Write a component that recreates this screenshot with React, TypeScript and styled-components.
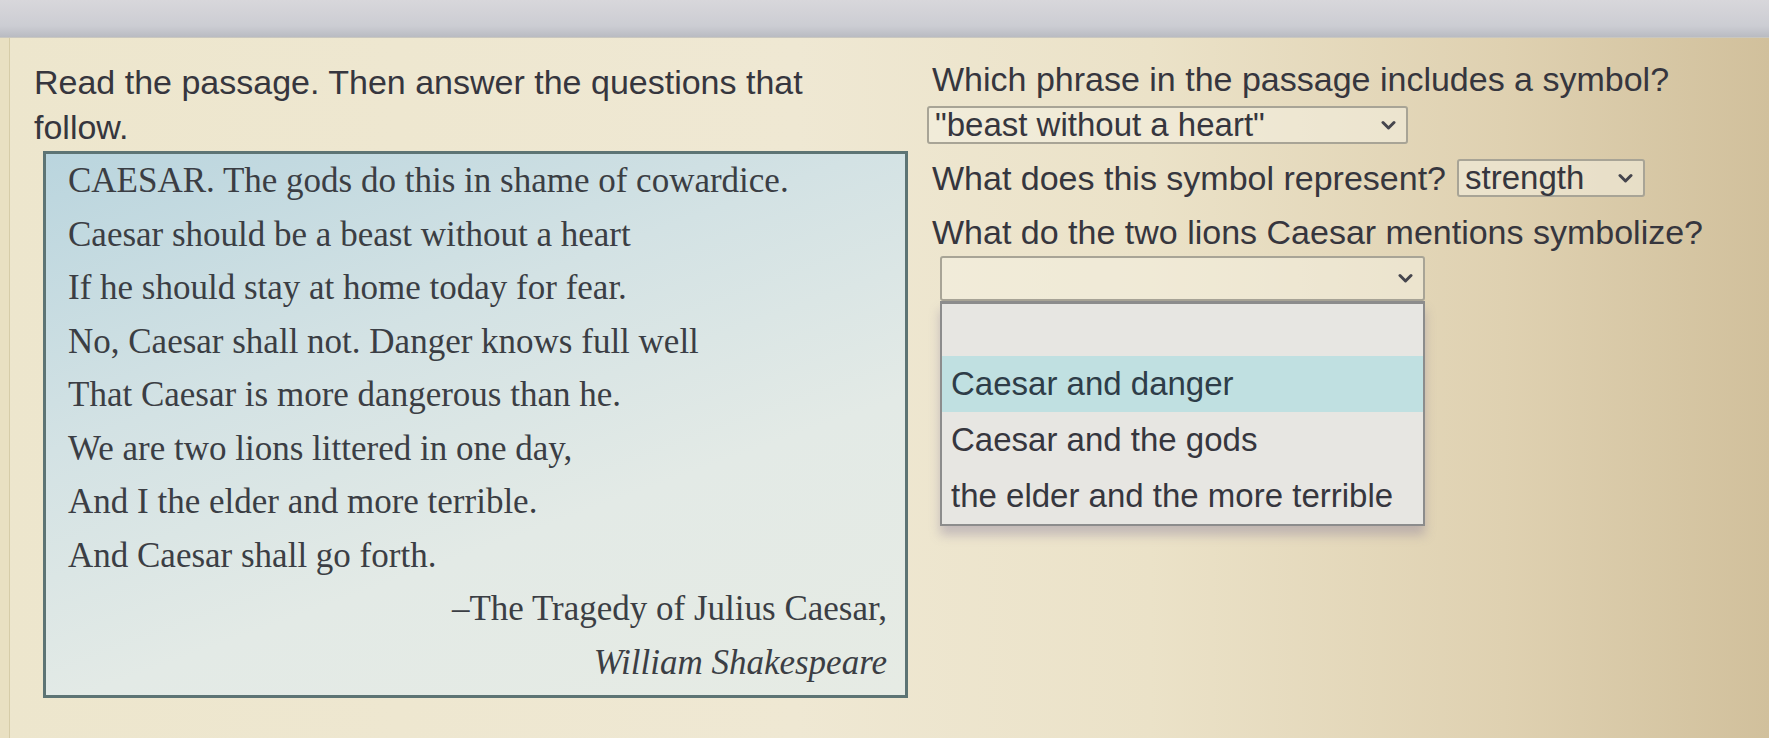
import React from 'react';
import styled, { createGlobalStyle } from 'styled-components';

const GlobalStyle = createGlobalStyle`
  html, body {
    margin: 0;
    padding: 0;
  }
  body {
    width: 1769px;
    height: 738px;
    overflow: hidden;
  }
`;

const Page = styled.div`
  width: 1769px;
  height: 738px;
  display: flex;
  flex-direction: column;
  background: linear-gradient(90deg, #ede6cd 0%, #efe8d3 45%, #ebe2c8 65%, #dfd1b1 85%, #d1c09c 100%);
  font-family: 'Liberation Sans', Arial, sans-serif;
  color: #36363e;
`;

const TopBar = styled.div`
  height: 37px;
  flex: 0 0 37px;
  background: linear-gradient(180deg, #d8d7db 0%, #cccdd3 70%, #b9bbc2 100%);
  border-bottom: 1px solid #c9c7bf;
`;

const Content = styled.div`
  flex: 1;
  display: flex;
  padding-left: 25px;
  border-left: 9px solid #e9e0c2;
  box-shadow: inset 1px 0 0 #d6cca8;
`;

const LeftColumn = styled.div`
  width: 874px;
  padding-top: 22px;
`;

const Intro = styled.p`
  margin: 0;
  width: 820px;
  font-size: 34px;
  line-height: 45px;
`;

const Passage = styled.div`
  margin: 1px 0 0 9px;
  height: 547px;
  box-sizing: border-box;
  border: 3px solid #5d7474;
  background: linear-gradient(160deg, #bad5de 0%, #d3e2e4 35%, #e3eae6 65%, #e6ebe4 100%);
  padding: 0 18px 0 22px;
  display: flex;
  flex-direction: column;
  font-family: 'Liberation Serif', 'Times New Roman', serif;
  color: #3b3e44;
`;

const Line = styled.div<{ $right?: boolean; $italic?: boolean }>`
  font-size: 35px;
  line-height: 53.5px;
  white-space: nowrap;
  text-align: ${(p) => (p.$right ? 'right' : 'left')};
  font-style: ${(p) => (p.$italic ? 'italic' : 'normal')};
`;

const RightColumn = styled.div`
  flex: 1;
  padding-top: 21px;
  padding-left: 24px;
  display: flex;
  flex-direction: column;
  align-items: flex-start;
`;

const Question = styled.div`
  font-size: 34px;
  line-height: 40px;
  white-space: nowrap;
`;

const Row = styled.div`
  display: flex;
  align-items: center;
  gap: 11px;
  margin-top: 14px;
`;

const SelectBox = styled.div<{ $width: number; $height: number }>`
  width: ${(p) => p.$width}px;
  height: ${(p) => p.$height}px;
  box-sizing: border-box;
  display: flex;
  align-items: center;
  justify-content: space-between;
  padding: 0 10px 0 6px;
  border: 2px solid #a8a496;
  border-radius: 3px;
  background: rgba(244, 240, 226, 0.55);
  font-size: 33px;
  color: #36363e;
  white-space: nowrap;
`;

const Chevron = () => (
  <svg width="15" height="11" viewBox="0 0 15 11">
    <path d="M2 2.5 L7.5 8 L13 2.5" fill="none" stroke="#45454d" strokeWidth="3" strokeLinecap="round" strokeLinejoin="round" />
  </svg>
);

const DropWrap = styled.div`
  position: relative;
  margin-top: 4px;
  margin-left: 8px;
`;

const ListBox = styled.div`
  position: absolute;
  top: 100%;
  left: 0;
  width: 485px;
  box-sizing: border-box;
  border: 2px solid #8c8c8c;
  border-top-width: 3px;
  background: #e7e6e2;
  box-shadow: 0 9px 10px rgba(120, 110, 150, 0.35);
`;

const Option = styled.div<{ $active?: boolean; $blank?: boolean }>`
  height: ${(p) => (p.$blank ? 52 : 56)}px;
  display: flex;
  align-items: center;
  padding-left: 9px;
  font-size: 33px;
  white-space: nowrap;
  color: ${(p) => (p.$active ? '#2e3d48' : '#36363e')};
  background: ${(p) => (p.$active ? '#c0e0e1' : 'transparent')};
`;

const passageLines = [
  'CAESAR. The gods do this in shame of cowardice.',
  'Caesar should be a beast without a heart',
  'If he should stay at home today for fear.',
  'No, Caesar shall not. Danger knows full well',
  'That Caesar is more dangerous than he.',
  'We are two lions littered in one day,',
  'And I the elder and more terrible.',
  'And Caesar shall go forth.',
];

const options = ['', 'Caesar and danger', 'Caesar and the gods', 'the elder and the more terrible'];

export default function App() {
  return (
    <>
      <GlobalStyle />
      <Page>
        <TopBar />
        <Content>
          <LeftColumn>
            <Intro>Read the passage. Then answer the questions that follow.</Intro>
            <Passage>
              {passageLines.map((l) => (
                <Line key={l}>{l}</Line>
              ))}
              <Line $right>–The Tragedy of Julius Caesar,</Line>
              <Line $right $italic>
                William Shakespeare
              </Line>
            </Passage>
          </LeftColumn>
          <RightColumn>
            <Question>Which phrase in the passage includes a symbol?</Question>
            <SelectBox $width={481} $height={38} style={{ marginTop: 7, marginLeft: -5 }}>
              <span>"beast without a heart"</span>
              <Chevron />
            </SelectBox>
            <Row>
              <Question>What does this symbol represent?</Question>
              <SelectBox $width={188} $height={38}>
                <span>strength</span>
                <Chevron />
              </SelectBox>
            </Row>
            <Question style={{ marginTop: 14 }}>What do the two lions Caesar mentions symbolize?</Question>
            <DropWrap>
              <SelectBox $width={485} $height={45}>
                <span />
                <Chevron />
              </SelectBox>
              <ListBox>
                {options.map((o, i) => (
                  <Option key={i} $active={i === 1} $blank={i === 0}>
                    {o}
                  </Option>
                ))}
              </ListBox>
            </DropWrap>
          </RightColumn>
        </Content>
      </Page>
    </>
  );
}
